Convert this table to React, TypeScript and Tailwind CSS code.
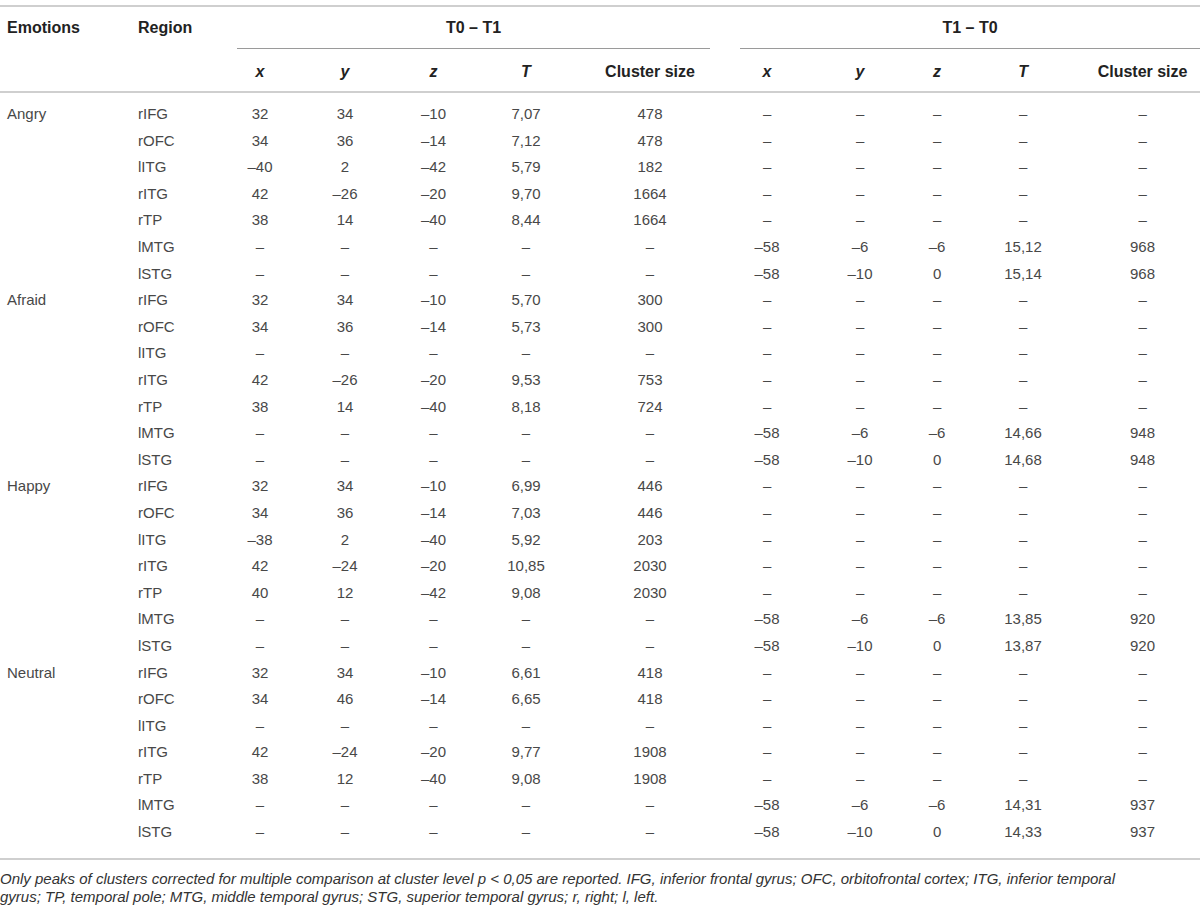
import React from "react"

type Row = { region: string; a: string[]; b: string[] }

const D = "–"
const empty = [D, D, D, D, D]

const groups: { emotion: string; rows: Row[] }[] = [
  {
    emotion: "Angry",
    rows: [
      { region: "rIFG", a: ["32", "34", "–10", "7,07", "478"], b: empty },
      { region: "rOFC", a: ["34", "36", "–14", "7,12", "478"], b: empty },
      { region: "lITG", a: ["–40", "2", "–42", "5,79", "182"], b: empty },
      { region: "rITG", a: ["42", "–26", "–20", "9,70", "1664"], b: empty },
      { region: "rTP", a: ["38", "14", "–40", "8,44", "1664"], b: empty },
      { region: "lMTG", a: empty, b: ["–58", "–6", "–6", "15,12", "968"] },
      { region: "lSTG", a: empty, b: ["–58", "–10", "0", "15,14", "968"] },
    ],
  },
  {
    emotion: "Afraid",
    rows: [
      { region: "rIFG", a: ["32", "34", "–10", "5,70", "300"], b: empty },
      { region: "rOFC", a: ["34", "36", "–14", "5,73", "300"], b: empty },
      { region: "lITG", a: empty, b: empty },
      { region: "rITG", a: ["42", "–26", "–20", "9,53", "753"], b: empty },
      { region: "rTP", a: ["38", "14", "–40", "8,18", "724"], b: empty },
      { region: "lMTG", a: empty, b: ["–58", "–6", "–6", "14,66", "948"] },
      { region: "lSTG", a: empty, b: ["–58", "–10", "0", "14,68", "948"] },
    ],
  },
  {
    emotion: "Happy",
    rows: [
      { region: "rIFG", a: ["32", "34", "–10", "6,99", "446"], b: empty },
      { region: "rOFC", a: ["34", "36", "–14", "7,03", "446"], b: empty },
      { region: "lITG", a: ["–38", "2", "–40", "5,92", "203"], b: empty },
      { region: "rITG", a: ["42", "–24", "–20", "10,85", "2030"], b: empty },
      { region: "rTP", a: ["40", "12", "–42", "9,08", "2030"], b: empty },
      { region: "lMTG", a: empty, b: ["–58", "–6", "–6", "13,85", "920"] },
      { region: "lSTG", a: empty, b: ["–58", "–10", "0", "13,87", "920"] },
    ],
  },
  {
    emotion: "Neutral",
    rows: [
      { region: "rIFG", a: ["32", "34", "–10", "6,61", "418"], b: empty },
      { region: "rOFC", a: ["34", "46", "–14", "6,65", "418"], b: empty },
      { region: "lITG", a: empty, b: empty },
      { region: "rITG", a: ["42", "–24", "–20", "9,77", "1908"], b: empty },
      { region: "rTP", a: ["38", "12", "–40", "9,08", "1908"], b: empty },
      { region: "lMTG", a: empty, b: ["–58", "–6", "–6", "14,31", "937"] },
      { region: "lSTG", a: empty, b: ["–58", "–10", "0", "14,33", "937"] },
    ],
  },
]

const subHeads = ["x", "y", "z", "T", "Cluster size"]

export default function App() {
  return (
    <main className="w-[1200px] h-[905px] bg-white overflow-hidden pt-[5px] font-['Liberation_Sans',Arial,sans-serif] text-[#484848]">
      <table className="w-[1200px] table-fixed border-collapse">
        <colgroup>
          <col className="w-[130px]" />
          <col className="w-[88px]" />
          <col className="w-[84px]" />
          <col className="w-[86px]" />
          <col className="w-[91px]" />
          <col className="w-[94px]" />
          <col className="w-[154px]" />
          <col className="w-[80px]" />
          <col className="w-[106px]" />
          <col className="w-[48px]" />
          <col className="w-[124px]" />
          <col className="w-[115px]" />
        </colgroup>
        <thead className="text-[16px] font-bold text-[#222]">
          <tr className="border-t-2 border-[#cfcfcf]">
            <th className="h-[42px] pl-[7px] text-left align-middle">Emotions</th>
            <th className="h-[42px] pl-[8px] text-left align-middle">Region</th>
            <th colSpan={5} className="h-[42px] p-0 align-bottom">
              <div className="ml-[19px] mr-[17px] h-[42px] flex items-center justify-center border-b border-[#9a9a9a]">
                T0 – T1
              </div>
            </th>
            <th colSpan={5} className="h-[42px] p-0 align-bottom">
              <div className="ml-[13px] h-[42px] flex items-center justify-center border-b border-[#9a9a9a]">
                T1 – T0
              </div>
            </th>
          </tr>
          <tr className="border-b-2 border-[#cfcfcf]">
            <th className="h-[43px]" />
            <th className="h-[43px]" />
            {[...subHeads, ...subHeads].map((h, i) => (
              <th
                key={i}
                className={`h-[43px] pt-[3px] text-center align-middle ${h.length === 1 ? "italic" : ""}`}
              >
                {h}
              </th>
            ))}
          </tr>
        </thead>
        <tbody className="text-[15px]">
          <tr>
            <td colSpan={12} className="h-[9px] p-0" />
          </tr>
          {groups.map((g) =>
            g.rows.map((r, i) => (
              <tr key={g.emotion + r.region} className="h-[26.6px]">
                <td className="pl-[7px] text-left align-middle">{i === 0 ? g.emotion : ""}</td>
                <td className="pl-[8px] text-left align-middle">{r.region}</td>
                {[...r.a, ...r.b].map((v, j) => (
                  <td key={j} className="text-center align-middle">
                    {v}
                  </td>
                ))}
              </tr>
            ))
          )}
          <tr className="border-b-2 border-[#cfcfcf]">
            <td colSpan={12} className="h-[13px] p-0" />
          </tr>
        </tbody>
      </table>
      <p className="mt-[10px] text-[15px] leading-[18px] italic text-[#333] whitespace-nowrap">
        Only peaks of clusters corrected for multiple comparison at cluster level p &lt; 0,05 are reported. IFG, inferior frontal gyrus; OFC, orbitofrontal cortex; ITG, inferior temporal
        <br />
        gyrus; TP, temporal pole; MTG, middle temporal gyrus; STG, superior temporal gyrus; r, right; l, left.
      </p>
    </main>
  )
}
